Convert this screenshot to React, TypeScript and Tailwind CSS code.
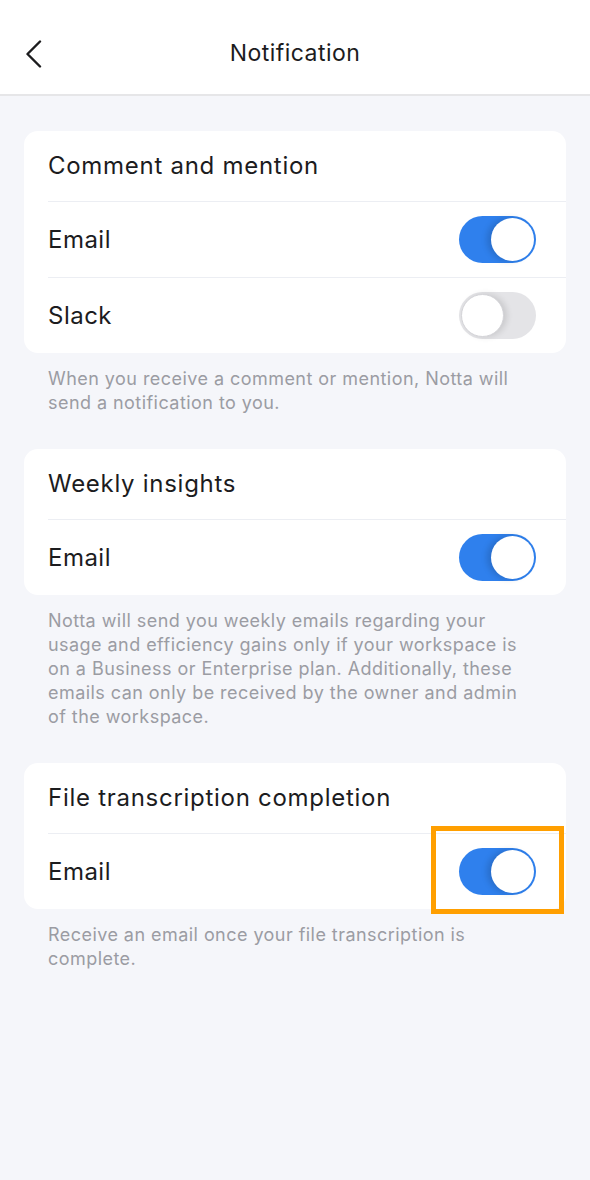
import { ReactNode } from "react";

const Toggle = ({ on }: { on: boolean }) => {
  if (on) {
    return (
      <div className="w-[77px] h-[47px] rounded-full bg-[#2f80ed] flex items-center justify-end p-[2px]">
        <div className="w-[43px] h-[43px] rounded-full bg-white shadow-[-4px_0_6px_rgba(0,0,0,0.15)]" />
      </div>
    );
  }
  return (
    <div className="w-[77px] h-[47px] rounded-full bg-[#e4e4e7] flex items-center justify-start p-[2px]">
      <div className="w-[43px] h-[43px] rounded-full bg-white border border-[#d4d4d8] shadow-[3px_0_6px_rgba(0,0,0,0.12)]" />
    </div>
  );
};

const Row = ({ label, children }: { label: string; children: ReactNode }) => (
  <div className="ml-6 pr-[30px] h-[76px] flex items-center justify-between border-t border-[#eceef3]">
    <span className="text-[24px] tracking-[0.02em] text-[#1c1c1e]">{label}</span>
    {children}
  </div>
);

const Section = ({ title, children, caption }: { title: string; children: ReactNode; caption: string }) => (
  <div>
    <div className="bg-white rounded-[14px] overflow-hidden">
      <div className="h-[70px] px-6 flex items-center text-[24px] tracking-[0.03em] text-[#1c1c1e]">{title}</div>
      {children}
    </div>
    <p className="pl-6 pr-[40px] pt-[14px] text-[18px] tracking-[0.025em] leading-[24px] text-[#9b9ca3]">{caption}</p>
  </div>
);

export default function App() {
  return (
    <div className="w-[590px] h-[1180px] bg-[#f5f6fa] relative" style={{ fontFamily: "Inter, 'Noto Sans', sans-serif" }}>
      <div className="h-[96px] bg-white border-b-2 border-[#e6e6e8] flex items-center justify-center relative">
        <svg className="absolute left-[24px] top-[40px]" width="20" height="28" viewBox="0 0 20 28" fill="none">
          <path d="M16 1.5 L3.5 14 L16 26.5" stroke="#1c1c1e" strokeWidth="2.4" strokeLinecap="round" strokeLinejoin="round" />
        </svg>
        <span className="text-[23px] tracking-[0.02em] text-[#1c1c1e] mt-[12px]">Notification</span>
      </div>

      <div className="px-6 pt-[35px] flex flex-col gap-[34px]">
        <Section
          title="Comment and mention"
          caption="When you receive a comment or mention, Notta will send a notification to you."
        >
          <Row label="Email"><Toggle on /></Row>
          <Row label="Slack"><Toggle on={false} /></Row>
        </Section>

        <Section
          title="Weekly insights"
          caption="Notta will send you weekly emails regarding your usage and efficiency gains only if your workspace is on a Business or Enterprise plan. Additionally, these emails can only be received by the owner and admin of the workspace."
        >
          <Row label="Email"><Toggle on /></Row>
        </Section>

        <Section
          title="File transcription completion"
          caption="Receive an email once your file transcription is complete."
        >
          <Row label="Email"><Toggle on /></Row>
        </Section>
      </div>

      <div className="absolute left-[431px] top-[826px] w-[133px] h-[88px] border-[5px] border-[#ff9f00]" />
    </div>
  );
}
